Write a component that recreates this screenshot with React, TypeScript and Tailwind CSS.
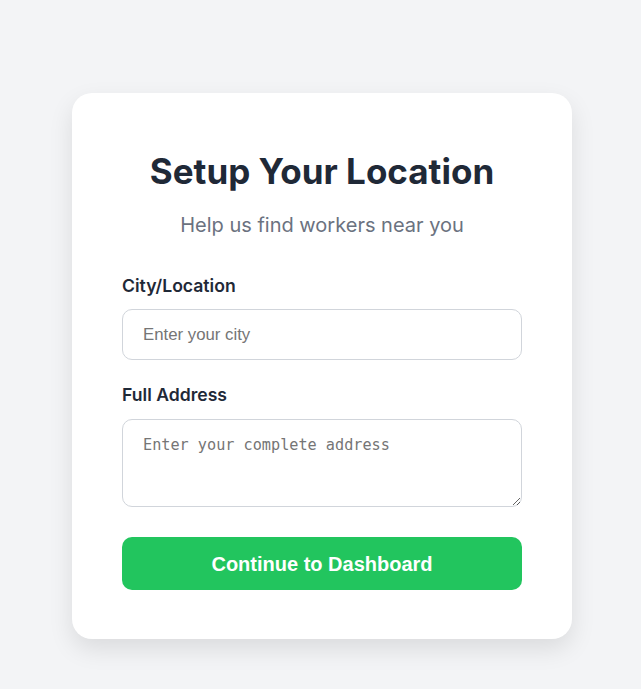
export default function App() {
  return (
    <div className="min-h-screen bg-[#f3f4f6] flex justify-center pl-[3px] pt-[93px] font-['Inter',sans-serif]">
      <div className="w-[500px] h-[546px] bg-white rounded-[20px] shadow-[0_10px_25px_rgba(0,0,0,0.1)] px-[50px] pt-[56px]">
        <h1 className="text-center text-[35px] leading-[44px] font-bold text-[#1f2937]">
          Setup Your Location
        </h1>
        <p className="mt-[17px] text-center text-[20px] leading-[30px] text-[#6b7280]">
          Help us find workers near you
        </p>
        <div className="mt-[34px]">
          <label className="block text-[17.6px] leading-[24px] font-semibold text-[#1f2937]">
            City/Location
          </label>
          <input
            type="text"
            placeholder="Enter your city"
            className="mt-[11px] block w-full h-[51px] rounded-[10px] border border-[#d1d5db] px-[20px] text-[16.8px] font-['Liberation_Sans',Arial,sans-serif] placeholder:text-[#757575] outline-none"
          />
        </div>
        <div className="mt-[23px]">
          <label className="block text-[17.6px] leading-[24px] font-semibold text-[#1f2937]">
            Full Address
          </label>
          <textarea
            placeholder="Enter your complete address"
            className="mt-[12px] block w-full h-[88px] rounded-[10px] border border-[#d1d5db] px-[20px] py-[15px] text-[15.2px] leading-[20px] font-['DejaVu_Sans_Mono',monospace] placeholder:text-[#757575] outline-none"
          />
        </div>
        <button className="mt-[30px] w-full h-[53px] rounded-[10px] bg-[#22c55e] text-white text-[20px] font-bold font-['Liberation_Sans',Arial,sans-serif]">
          Continue to Dashboard
        </button>
      </div>
    </div>
  );
}
